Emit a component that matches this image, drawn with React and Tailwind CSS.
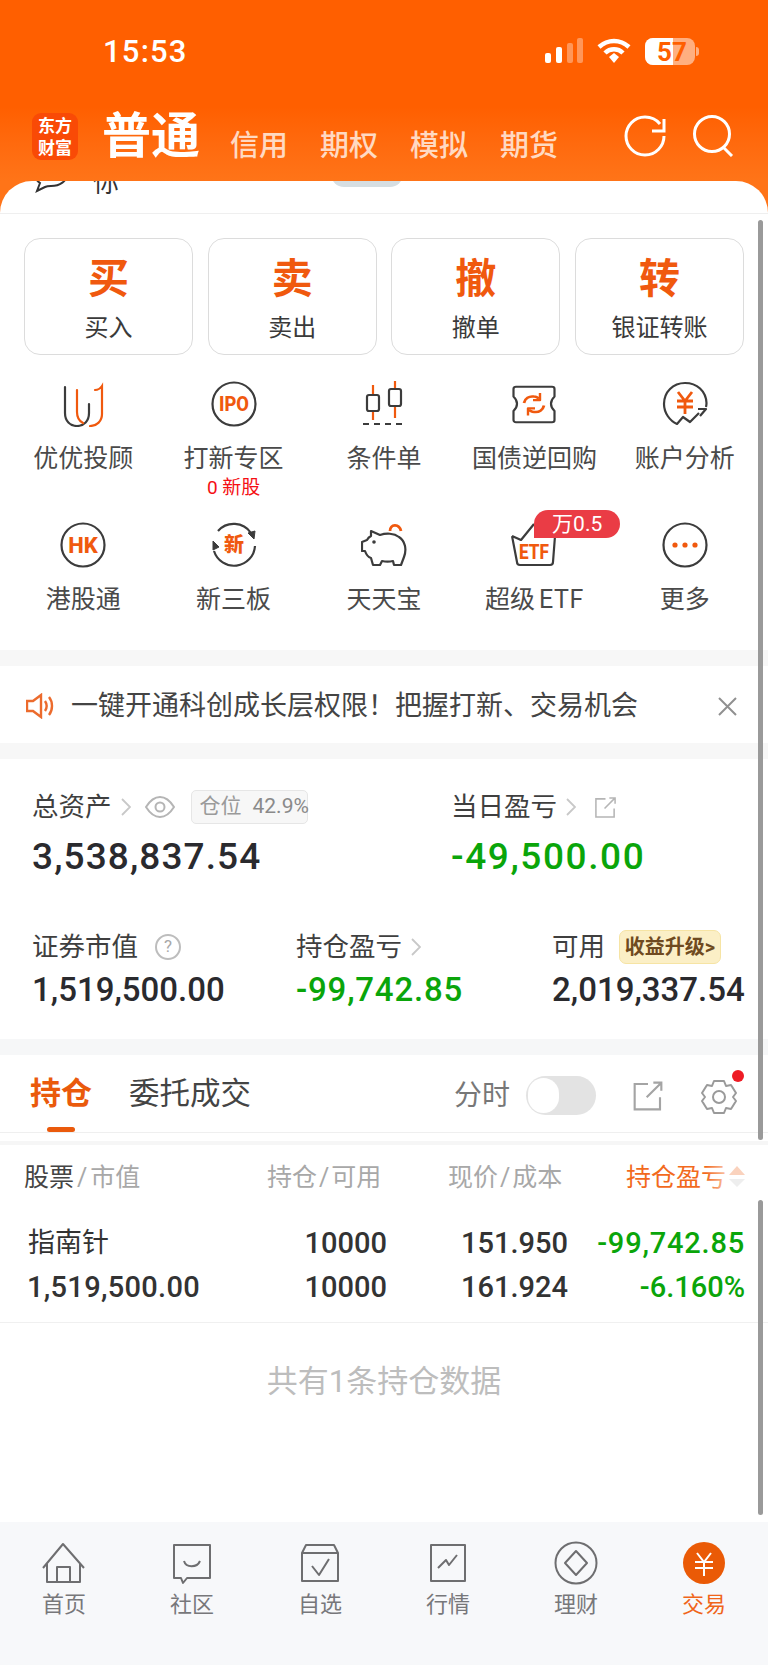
import React from "react";

const ORANGE = "#f0590e";
const DARK = "#3c3c3c";

// svg icons for the function grid, drawn on a 46 box
const IconU = () => (
  <svg width="46" height="46" viewBox="0 0 46 46" fill="none" strokeWidth="2.2" strokeLinecap="round">
    <g transform="translate(3 2)">
      <path d="M2 4v26c0 8 5 13 12 13s12-5 12-13V21" stroke={DARK} />
      <path d="M14 7v22c0 5 2 9 6 11" stroke={ORANGE} />
      <path d="M32 7c2 0 5-1 7-4v28c0 7-5 12-12 12" stroke={ORANGE} />
    </g>
  </svg>
);

const CircleText = ({ label, size = 17, width }) => (
  <svg width="46" height="46" viewBox="0 0 46 46" fill="none">
    <circle cx="23" cy="23" r="21.5" stroke={DARK} strokeWidth="2.2" />
    <text x="23" y={23 + size * 0.36} textAnchor="middle" fontSize={size} fontWeight="800" fill={ORANGE} fontFamily="Roboto, sans-serif" textLength={width} lengthAdjust="spacingAndGlyphs">{label}</text>
  </svg>
);

const IconCandle = () => (
  <svg width="46" height="46" viewBox="0 0 46 46" fill="none" strokeWidth="2.2">
    <path d="M12 4v11M12 29v10M34 0v9M34 25v12" stroke={ORANGE} />
    <rect x="6" y="14" width="12" height="16" rx="2" stroke={DARK} />
    <rect x="28" y="8" width="12" height="17" rx="2" stroke={DARK} />
    <path d="M2 43h39" stroke={DARK} strokeDasharray="6 5" />
  </svg>
);

const IconTicket = () => (
  <svg width="46" height="46" viewBox="0 0 46 46" fill="none" strokeWidth="2.2" strokeLinejoin="round">
    <g transform="translate(0 3) scale(1 0.9)">
      <path d="M5 3h36c1.500 0 2.500 1 2.500 2.500V14c-2 2-3.500 5-3.500 8s1.500 6 3.500 8v10c0 1.500-1 2.500-2.500 2.500H5c-1.500 0-2.500-1-2.500-2.500V30c2-2 3.500-5 3.500-8s-1.500-6-3.500-8V5.500C2.500 4 3.500 3 5 3z" stroke={DARK} />
      <path d="M13 21c1-5 5-8 10-7 2 0 3 1 5 2M33 24c-1 5-5 8-10 7-2 0-3-1-5-2" stroke={ORANGE} strokeWidth="2.800" />
      <path d="M29 10v8h-7M17 35v-8h7" stroke={ORANGE} strokeWidth="2.400" />
    </g>
  </svg>
);

const IconYen = () => (
  <svg width="46" height="46" viewBox="0 0 46 46" fill="none" strokeWidth="2.2" strokeLinejoin="round">
    <path d="M44 26c.5-2 .5-3 .5-4C44 10 35 2 23 2 11 2 2 11 2 23c0 9 6 17 13 20l6-7 7 5 9-9" stroke={DARK} />
    <path d="M36 28h8l-6 7" stroke={DARK} />
    <path d="M16 11l7 9 7-9M15 20h16M15 26h16M23 20v13" stroke={ORANGE} strokeWidth="2.800" />
  </svg>
);

const IconNew = () => (
  <svg width="46" height="46" viewBox="0 0 46 46" fill="none" strokeWidth="2.2">
    <path d="M7 9A21 21 0 0 1 40 11M44 24A21 21 0 0 1 3 29" stroke={DARK} />
    <path d="M37 11l7-2-1 8zM2 19l6 6-6 3z" fill={DARK} stroke={DARK} strokeWidth="1" />
    <text x="23" y="30" textAnchor="middle" fontSize="20" fontWeight="800" fill={ORANGE} fontFamily="Noto Sans CJK SC, sans-serif">新</text>
  </svg>
);

const IconPig = () => (
  <svg width="46" height="46" viewBox="0 0 46 46" fill="none" strokeWidth="2.2" strokeLinejoin="round">
    <path d="M29 9c0-7 9-8 11 0" stroke={ORANGE} strokeWidth="2.800" />
    <path d="M10 9l9 4c6-2 14-2 19 2 6 4 8 12 5 20l-3 8h-7l-1-4c-4 1-7 1-11 0l-2 4h-7l-2-7c-3-1-5-4-6-7H1v-9l5-2c1-2 2-3 4-4z" stroke={DARK} />
    <circle cx="13" cy="20" r="1.800" fill={DARK} />
  </svg>
);

const IconEtf = () => (
  <svg width="46" height="46" viewBox="0 0 46 46" fill="none" strokeWidth="2.2" strokeLinejoin="round">
    <path d="M1 14l9 4 13-16M44 14l-2 26c0 2-1 3-3 3H9c-2 0-3-1-3-3L1 14" stroke={DARK} />
    <text x="23" y="37" textAnchor="middle" fontSize="20" fontWeight="800" fill={ORANGE} fontFamily="Roboto, sans-serif" textLength="30" lengthAdjust="spacingAndGlyphs">ETF</text>
  </svg>
);

const IconMore = () => (
  <svg width="46" height="46" viewBox="0 0 46 46" fill="none">
    <circle cx="23" cy="23" r="21.5" stroke={DARK} strokeWidth="2.2" />
    <circle cx="13" cy="23" r="2.600" fill={ORANGE} />
    <circle cx="23" cy="23" r="2.600" fill={ORANGE} />
    <circle cx="33" cy="23" r="2.600" fill={ORANGE} />
  </svg>
);

const trades = [
  { big: "买", label: "买入" },
  { big: "卖", label: "卖出" },
  { big: "撤", label: "撤单" },
  { big: "转", label: "银证转账" },
];

const tools = [
  { id: "uu", label: "优优投顾", icon: <IconU /> },
  { id: "ipo", label: "打新专区", icon: <CircleText label="IPO" size={20} width={30} />, sub: "0 新股" },
  { id: "cond", label: "条件单", icon: <IconCandle /> },
  { id: "repo", label: "国债逆回购", icon: <IconTicket /> },
  { id: "acct", label: "账户分析", icon: <IconYen /> },
  { id: "hk", label: "港股通", icon: <CircleText label="HK" size={22} /> },
  { id: "neeq", label: "新三板", icon: <IconNew /> },
  { id: "ttb", label: "天天宝", icon: <IconPig /> },
  { id: "etf", label: <>超级<span className="ml-[4px] tracking-[0.5px]">ETF</span></>, icon: <IconEtf />, tag: "万0.5" },
  { id: "more", label: "更多", icon: <IconMore /> },
];

const NAV_GRAY = "#6e6e70";
const navs = [
  {
    label: "首页",
    icon: (
      <svg width="46" height="44" viewBox="0 0 46 44" fill="none" stroke={NAV_GRAY} strokeWidth="2" strokeLinejoin="round">
        <path d="M2 27L22 3l21 24M6 23v18h33V23M16 41V26h13v15" />
      </svg>
    ),
  },
  {
    label: "社区",
    icon: (
      <svg width="46" height="44" viewBox="0 0 46 44" fill="none" stroke={NAV_GRAY} strokeWidth="2" strokeLinejoin="round">
        <path d="M5 4h36v33H18l-4 5-2-5H5z" />
        <path d="M15 20c2 7 13 7 16 0" />
      </svg>
    ),
  },
  {
    label: "自选",
    icon: (
      <svg width="46" height="44" viewBox="0 0 46 44" fill="none" stroke={NAV_GRAY} strokeWidth="2" strokeLinejoin="round">
        <path d="M5 12l4-8h28l4 8v28H5zM5 12h36" />
        <path d="M15 25l7 9 10-16" />
      </svg>
    ),
  },
  {
    label: "行情",
    icon: (
      <svg width="46" height="44" viewBox="0 0 46 44" fill="none" stroke={NAV_GRAY} strokeWidth="2" strokeLinejoin="round">
        <path d="M6 4h34v36H6z" />
        <path d="M13 27l8-8 3 5 8-10" />
      </svg>
    ),
  },
  {
    label: "理财",
    icon: (
      <svg width="46" height="44" viewBox="0 0 46 44" fill="none" stroke={NAV_GRAY} strokeWidth="2" strokeLinejoin="round">
        <circle cx="23" cy="22" r="20.500" />
        <path d="M23 10l11 12-11 12-11-12z" />
      </svg>
    ),
  },
  {
    label: "交易",
    active: true,
    icon: (
      <svg width="46" height="44" viewBox="0 0 46 44" fill="none">
        <circle cx="23" cy="22" r="21" fill="#ea5a06" />
        <path d="M16 12l7 9 7-9M14 21h18M14 27h18M23 21v14" stroke="#fff" strokeWidth="2" />
      </svg>
    ),
  },
];

function Chevron() {
  return (
    <svg width="10" height="20" viewBox="0 0 10 20" fill="none" stroke="#c8c8c8" strokeWidth="1.800">
      <path d="M1 2l8 8-8 8" />
    </svg>
  );
}

function ShareIcon({ size = 24, color = "#b5b5b5" }) {
  return (
    <svg width={size} height={size} viewBox="0 0 24 24" fill="none" stroke={color} strokeWidth="1.600">
      <path d="M12 3H2v19h19V13M11 13L22 2M16 2h6v6" />
    </svg>
  );
}

export default function App() {
  return (
    <div className="relative w-[768px] h-[1665px] overflow-hidden flex flex-col bg-white text-[#333] font-['Roboto','Noto_Sans_CJK_SC',sans-serif]">
      {/* status bar */}
      <div className="h-[107px] bg-[#ff5f00] flex text-white">
        <div className="pl-[103px] pt-[33px] text-[31px] leading-[38px] font-medium tracking-[1.2px]">15:53</div>
        <div className="ml-auto pr-[69px] pt-[38px] flex items-start gap-[14px]">
          <svg width="38" height="26" viewBox="0 0 38 26" fill="#fff">
            <rect x="0" y="15" width="6" height="10" rx="2" />
            <rect x="11" y="9" width="6" height="16" rx="2" />
            <rect x="22" y="5" width="6" height="20" rx="2" opacity="0.35" />
            <rect x="32" y="0" width="6" height="25" rx="2" opacity="0.35" />
          </svg>
          <svg width="34" height="26" viewBox="0 0 34 26" fill="none" stroke="#fff" strokeWidth="4.500">
            <path d="M2 9c9-8 21-8 30 0M8 15c5-5 13-5 18 0" />
            <path d="M12 19l5-4 5 4-5 6z" fill="#fff" stroke="none" />
          </svg>
          <div className="flex items-center gap-[1px]">
            <div className="relative w-[50px] h-[27px] rounded-[8px] overflow-hidden bg-white/50 flex">
              <div className="w-[28px] bg-white"></div>
              <span className="absolute left-[12px] top-0 h-[27px] flex items-center text-[#ff5f00] text-[26px] font-bold leading-none">57</span>
            </div>
            <div className="w-[3px] h-[9px] rounded-r-full bg-white/50"></div>
          </div>
        </div>
      </div>

      {/* header tabs */}
      <div className="h-[74px] bg-gradient-to-b from-[#ff5f00] to-[#ff7418] flex items-start pl-[32px] text-white">
        <div className="mt-[6px] w-[46px] h-[47px] rounded-[9px] bg-[#f94a06] flex items-center justify-center text-center text-[17px] leading-[22px] font-semibold">
          东方<br />财富
        </div>
        <div className="ml-[24px] mt-[2px] text-[49px] leading-[56px] font-bold">普通</div>
        <div className="ml-[30px] mt-[19px] flex gap-[32px] text-[29px] leading-[40px] font-medium text-white/75">
          <span>信用</span>
          <span>期权</span>
          <span>模拟</span>
          <span>期货</span>
        </div>
        <div className="ml-auto pr-[34px] mt-[8px] flex gap-[26px]">
          <svg width="42" height="42" viewBox="0 0 42 42" fill="none" stroke="#fff" strokeWidth="3">
            <path d="M36 9C32 4 27 2 21 2 10 2 2 11 2 21s8 19 19 19 19-9 19-19" />
            <path d="M40 4v12H28" />
          </svg>
          <svg width="42" height="42" viewBox="0 0 42 42" fill="none" stroke="#fff" strokeWidth="3">
            <circle cx="20" cy="19" r="17.500" />
            <path d="M31 32l9 9" />
          </svg>
        </div>
      </div>

      {/* sheet sits on the orange, the scrolled row peeks under its top edge */}
      <div className="relative flex-1 flex flex-col bg-[#ff7418]">
        <div className="bg-white rounded-t-[32px] flex-1 flex flex-col overflow-hidden">
          <div className="h-[32px] overflow-hidden flex items-start pl-[33px] border-b border-[#efefef] box-content">
            <svg className="-mt-[22px]" width="36" height="34" viewBox="0 0 36 34" fill="none" stroke="#333" strokeWidth="2">
              <path d="M18 3c9 0 16 5 16 12s-7 12-16 12c-2 0-4 0-6 1l-8 4 3-8c-3-2-5-5-5-9C2 8 9 3 18 3z" />
            </svg>
            <span className="ml-[24px] -mt-[16px] text-[26px] leading-[36px]">你</span>
            <div className="ml-[212px] -mt-[20px] w-[72px] h-[26px] rounded-full bg-[#d6dee2]"></div>
          </div>

          {/* trade buttons */}
          <div className="pt-[24px] pl-[24px] pr-[24px] grid grid-cols-4 gap-x-[14.500px]">
            {trades.map((t) => (
              <div key={t.big} className="h-[117px] rounded-[16px] border border-[#dcdcdc] flex flex-col items-center">
                <span className="mt-[12px] text-[41px] leading-[56px] font-bold text-[#f0590e]">{t.big}</span>
                <span className="mt-[4px] text-[24px] leading-[34px] text-[#3a3a3a]">{t.label}</span>
              </div>
            ))}
          </div>

          {/* tool grid */}
          <div className="pl-[8px] pr-[8px] pt-[26px] grid grid-cols-5 grid-rows-[141px_128px]">
            {tools.map((t) => (
              <div key={t.id} className="relative flex flex-col items-center">
                <div className="h-[46px]">{t.icon}</div>
                <span className="mt-[16px] text-[25px] leading-[32px] text-[#4a4a4a] whitespace-nowrap">{t.label}</span>
                {t.sub && <span className="text-[19px] leading-[26px] text-[#f50f14]">{t.sub}</span>}
                {t.tag && (
                  <span className="absolute left-[75px] -top-[12px] w-[86px] h-[28px] text-center rounded-tl-[14px] rounded-r-[14px] bg-[#ea3c45] text-white text-[21px] leading-[28px] whitespace-nowrap">
                    {t.tag}
                  </span>
                )}
              </div>
            ))}
          </div>
          <div className="h-[16px] bg-[#f7f7f7]"></div>

          {/* notice */}
          <div className="h-[77px] flex items-center pl-[26px] pr-[31px] pt-[3px]">
            <svg width="28" height="26" viewBox="0 0 28 26" fill="none" stroke="#ec6b2d" strokeWidth="2.400">
              <path d="M1 8h6l8-6v22l-8-6H1zM19 8c2 3 2 7 0 10M23 4c4 5 4 13 0 18" />
            </svg>
            <span className="ml-[17px] text-[27px] leading-[36px] text-[#444] whitespace-nowrap">一键开通科创成长层权限！把握打新、交易机会</span>
            <svg className="ml-auto" width="19" height="19" viewBox="0 0 19 19" fill="none" stroke="#909090" strokeWidth="2">
              <path d="M1 1l17 17M18 1L1 18" />
            </svg>
          </div>
          <div className="h-[16px] bg-[#f7f7f7]"></div>

          {/* assets */}
          <div className="h-[280px] pl-[32px] pt-[31px]">
            <div className="grid grid-cols-[419px_1fr]">
              <div>
                <div className="h-[34px] flex items-center text-[26.500px] text-[#3f3f3f]">
                  <span>总资产</span>
                  <span className="ml-[9px]"><Chevron /></span>
                  <svg className="ml-[14px]" width="30" height="24" viewBox="0 0 30 24" fill="none" stroke="#b5b5b5" strokeWidth="2">
                    <path d="M1 12C6 4 11 2 15 2s9 2 14 10c-5 8-10 10-14 10S6 20 1 12z" />
                    <circle cx="15" cy="12" r="4.500" />
                  </svg>
                  <div className="ml-[16px] w-[117px] h-[34px] rounded-[5px] border border-[#e6e6e6] bg-[#f7f7f7] flex items-center pl-[8px] text-[21px] text-[#9a9a9a] whitespace-nowrap">
                    <span>仓位</span>
                    <span className="ml-[11px] text-[#8a8a8a]">42.9%</span>
                  </div>
                </div>
                <div className="mt-[11px] text-[37px] leading-[44px] font-medium tracking-[1.100px] text-[#2a2a2e]">3,538,837.54</div>
              </div>
              <div>
                <div className="h-[34px] flex items-center text-[26.500px] text-[#3f3f3f]">
                  <span>当日盈亏</span>
                  <span className="ml-[9px]"><Chevron /></span>
                  <span className="ml-[18px]"><ShareIcon size={23} /></span>
                </div>
                <div className="mt-[11px] text-[37px] leading-[44px] font-medium tracking-[1.600px] text-[#0aa50a]">-49,500.00</div>
              </div>
            </div>
            <div className="mt-[51px] grid grid-cols-[264px_256px_1fr]">
              <div>
                <div className="h-[34px] flex items-center text-[26.500px] text-[#3f3f3f]">
                  <span>证券市值</span>
                  <span className="ml-[17px] w-[26px] h-[26px] rounded-full border-2 border-[#bdbdbd] flex items-center justify-center text-[17px] text-[#a8a8a8]">?</span>
                </div>
                <div className="mt-[6px] text-[33px] leading-[40px] font-medium text-[#2a2a2e]">1,519,500.00</div>
              </div>
              <div>
                <div className="h-[34px] flex items-center text-[26.500px] text-[#3f3f3f]">
                  <span>持仓盈亏</span>
                  <span className="ml-[9px]"><Chevron /></span>
                </div>
                <div className="mt-[6px] text-[33px] leading-[40px] font-medium tracking-[0.800px] text-[#0aa50a]">-99,742.85</div>
              </div>
              <div>
                <div className="h-[34px] flex items-center text-[26.500px] text-[#3f3f3f]">
                  <span>可用</span>
                  <span className="ml-[14px] w-[102px] h-[34px] rounded-[7px] border border-[#f6e4a4] bg-[#fbefc6] flex items-center justify-center text-[20px] font-bold text-[#6f4a20] whitespace-nowrap">收益升级&gt;</span>
                </div>
                <div className="mt-[6px] text-[33px] leading-[40px] font-medium text-[#2a2a2e] whitespace-nowrap">2,019,337.54</div>
              </div>
            </div>
          </div>
          <div className="h-[16px] bg-[#f6f7f8]"></div>

          {/* holdings tabs */}
          <div className="relative h-[78px] border-b border-[#efefef] flex items-start pl-[30px]">
            <span className="mt-[19px] text-[31px] leading-[40px] font-semibold text-[#ea5a0c]">持仓</span>
            <span className="ml-[37px] mt-[19px] text-[30.500px] leading-[40px] text-[#444]">委托成交</span>
            <span className="absolute left-[47px] bottom-0 w-[28px] h-[5px] rounded-full bg-[#ea5a0c]"></span>
            <div className="ml-auto pr-[30px] flex items-center">
              <span className="mt-[21px] text-[28px] leading-[40px] text-[#777]">分时</span>
              <div className="ml-[16px] mt-[19px] w-[70px] h-[39px] rounded-full bg-[#e3e3e3] flex items-center pl-[2px]">
                <div className="w-[31px] h-[35px] rounded-full bg-white"></div>
              </div>
              <span className="ml-[36px] mt-[20px]"><ShareIcon size={32} color="#a4a4a4" /></span>
              <svg className="ml-[36px] mt-[22px]" width="38" height="36" viewBox="0 0 38 36" fill="none" stroke="#9a9a9a" strokeWidth="2" strokeLinejoin="round">
                <path d="M14 2h10l2 5 5-1 5 8-3 4 3 4-5 8-5-1-2 5H14l-2-5-5 1-5-8 3-4-3-4 5-8 5 1z" />
                <circle cx="19" cy="18" r="6" />
              </svg>
              <span className="absolute right-[24px] top-[15px] w-[12px] h-[12px] rounded-full bg-[#ee1c25]"></span>
            </div>
          </div>
          <div className="h-[8px]"></div>
          <div className="h-[4px] bg-[#f6f6f6]"></div>

          {/* table */}
          <div className="relative h-[62px] pl-[24px] pt-[4px] grid grid-cols-[243px_181px_178px_1fr] items-center text-[25px] text-[#a8a8a8] whitespace-nowrap">
            <span><span className="text-[#444]">股票</span><span className="mx-[3px]">/</span>市值</span>
            <span>持仓<span className="mx-[2px]">/</span>可用</span>
            <span>现价<span className="mx-[2px]">/</span>成本</span>
            <span className="text-[#f26a1d]">持仓盈亏</span>
            <div className="absolute left-[706px] top-0 w-[30px] h-[62px] bg-gradient-to-r from-white/0 to-white/90"></div>
            <svg className="absolute left-[729px] top-[21px]" width="16" height="22" viewBox="0 0 16 22">
              <path d="M8 0l8 9H0z" fill="#fad2bd" />
              <path d="M0 13h16l-8 8z" fill="#eeeeee" />
            </svg>
          </div>
          <div className="pt-[14px] pb-[13px] pl-[28px] border-b border-[#f0f0f0] text-[29px] leading-[44px] font-medium text-[#333]">
            <div className="grid grid-cols-[260px_99px_181px_177px] text-right">
              <span className="text-left text-[27px] font-normal">指南针</span>
              <span>10000</span>
              <span>151.950</span>
              <span className="text-[#0aa50a] tracking-[0.800px]">-99,742.85</span>
            </div>
            <div className="grid grid-cols-[260px_99px_181px_177px] text-right">
              <span className="-ml-[1px] text-left whitespace-nowrap tracking-[0.300px]">1,519,500.00</span>
              <span>10000</span>
              <span>161.924</span>
              <span className="text-[#0aa50a]">-6.160%</span>
            </div>
          </div>
          <div className="pt-[39px] text-center text-[31px] leading-[40px] text-[#bdbdbd]">共有1条持仓数据</div>
          <div className="flex-1"></div>

          {/* bottom nav */}
          <div className="h-[143px] bg-[#f7f8fa] grid grid-cols-6 pt-[19px]">
            {navs.map((n) => (
              <div key={n.label} className="flex flex-col items-center">
                <div className="h-[44px]">{n.icon}</div>
                <span className={`mt-[5px] text-[22px] leading-[30px] ${n.active ? "text-[#f0651a]" : "text-[#77777a]"}`}>{n.label}</span>
              </div>
            ))}
          </div>
        </div>
      </div>

      {/* scrollbars */}
      <div className="absolute left-[758px] top-[220px] w-[5px] h-[920px] rounded-full bg-[#9a9a9a]"></div>
      <div className="absolute left-[758px] top-[1200px] w-[5px] h-[315px] rounded-full bg-[#9a9a9a]"></div>
    </div>
  );
}
